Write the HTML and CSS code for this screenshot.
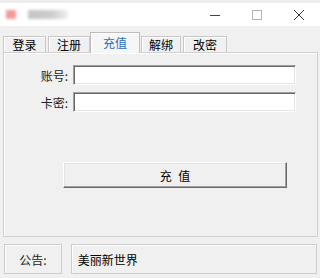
FILE: index.html
```html
<!DOCTYPE html>
<html lang="zh-CN">
<head>
	<meta charset="UTF-8" />
	<title>充值</title>
	<link rel="stylesheet" href="styles.css">
</head>
<body>
	<div class="window">
		<div class="titlebar">
			<span class="app-icon"></span>
			<span class="app-title"></span>
			<div class="controls">
				<span class="ctl">
					<svg width="12" height="12" viewBox="0 0 12 12"><path d="M1 6.5h10" stroke="#444" stroke-width="1"/></svg>
				</span>
				<span class="ctl">
					<svg width="12" height="12" viewBox="0 0 12 12"><rect x="1.5" y="1.5" width="9" height="9" fill="none" stroke="#b4b4b4" stroke-width="1"/></svg>
				</span>
				<span class="ctl">
					<svg width="12" height="12" viewBox="0 0 12 12"><path d="M1 1L11 11M11 1L1 11" stroke="#333" stroke-width="1"/></svg>
				</span>
			</div>
		</div>
		<div class="main">
			<div class="tabs">
				<div class="tab t1">登录</div>
				<div class="tab t2">注册</div>
				<div class="tab t3 active">充值</div>
				<div class="tab t4">解绑</div>
				<div class="tab t5">改密</div>
			</div>
			<div class="panel">
				<div class="row">
					<label class="lbl">账号:</label>
					<input class="field" type="text">
				</div>
				<div class="row">
					<label class="lbl">卡密:</label>
					<input class="field" type="text">
				</div>
				<button class="submit">充 值</button>
			</div>
			<div class="notice">
				<div class="notice-label">公告:</div>
				<div class="notice-text">美丽新世界</div>
			</div>
		</div>
	</div>
</body>
</html>
```

FILE: styles.css
```css
*{
	box-sizing: border-box;
}
body{
	margin: 0;
	width: 320px;
	height: 278px;
	overflow: hidden;
	font-family: "Noto Sans CJK SC", "Microsoft YaHei", sans-serif;
	font-size: 12px;
	color: #000;
	background: #f0f0f0;
}
.window{
	width: 320px;
	height: 278px;
	display: flex;
	flex-direction: column;
}
.titlebar{
	height: 26px;
	background: #fff;
	border-top: 3px solid #ededed;
	display: flex;
	align-items: center;
}
.app-icon{
	width: 10px;
	height: 9px;
	margin-left: 6px;
	background: #f29a9a;
	filter: blur(1.5px);
}
.app-title{
	width: 40px;
	height: 9px;
	margin-left: 12px;
	background: linear-gradient(to right, #c4c4c4, #cdcdcd 60%, #f0f0f0);
	filter: blur(1.8px);
}
.controls{
	margin-left: auto;
	display: flex;
	height: 100%;
}
.ctl{
	width: 42px;
	display: flex;
	align-items: center;
	justify-content: center;
}
.main{
	flex: 1;
	padding: 6px 3px 0 3px;
	display: flex;
	flex-direction: column;
}
.tabs{
	display: flex;
	align-items: flex-end;
	height: 20px;
}
.tab{
	height: 16px;
	line-height: 15px;
	text-align: center;
	border: 1px solid #c8c8c8;
	border-bottom: none;
	background: #f0f0f0;
	box-shadow: inset 1px 1px 0 #fff;
}
.t1{ width: 43px; }
.t2{ width: 42px; margin-left: 2px; }
.t3{ width: 50px; }
.t4{ width: 40px; margin-left: 1px; }
.t5{ width: 44px; margin-left: 2px; }
.tab.active{
	height: 21px;
	line-height: 19px;
	margin-bottom: -1px;
	position: relative;
	z-index: 1;
	color: #2a6cbd;
	background: #f6f6f6;
	border-color: #bdbdbd;
}
.panel{
	width: 315px;
	height: 185px;
	border: 1px solid #cfcfcf;
	box-shadow: inset 1px 1px 0 #fff;
	padding-top: 12px;
	display: flex;
	flex-direction: column;
}
.row{
	display: flex;
	align-items: center;
	margin-bottom: 7px;
}
.lbl{
	width: 64px;
	text-align: right;
	margin-right: 5px;
	color: #222;
}
.field{
	width: 223px;
	height: 20px;
	margin: 0;
	background: #fff;
	border-style: solid;
	border-width: 1px;
	border-color: #a0a0a0 #ffffff #ffffff #a0a0a0;
	box-shadow: inset 1px 1px 0 #696969, inset -1px -1px 0 #e3e3e3;
	outline: none;
}
.submit{
	width: 224px;
	height: 26px;
	margin: 43px 0 0 59px;
	padding: 0;
	font-family: inherit;
	font-size: 12px;
	word-spacing: 4px;
	color: #000;
	background: #f0f0f0;
	border-style: solid;
	border-width: 1px;
	border-color: #ffffff #696969 #696969 #ffffff;
	box-shadow: inset -1px -1px 0 #a0a0a0, inset 1px 1px 0 #e3e3e3;
}
.notice{
	display: flex;
	margin-top: 7px;
	height: 30px;
}
.notice-label{
	width: 58px;
	margin-left: 1px;
	display: flex;
	align-items: center;
	justify-content: center;
	border: 1px solid #cdcdcd;
	box-shadow: inset 1px 1px 0 #fff;
	color: #222;
}
.notice-text{
	width: 247px;
	margin-left: 9px;
	padding-left: 6px;
	display: flex;
	align-items: center;
	border: 1px solid #cdcdcd;
	box-shadow: inset 1px 1px 0 #fff;
}
```
